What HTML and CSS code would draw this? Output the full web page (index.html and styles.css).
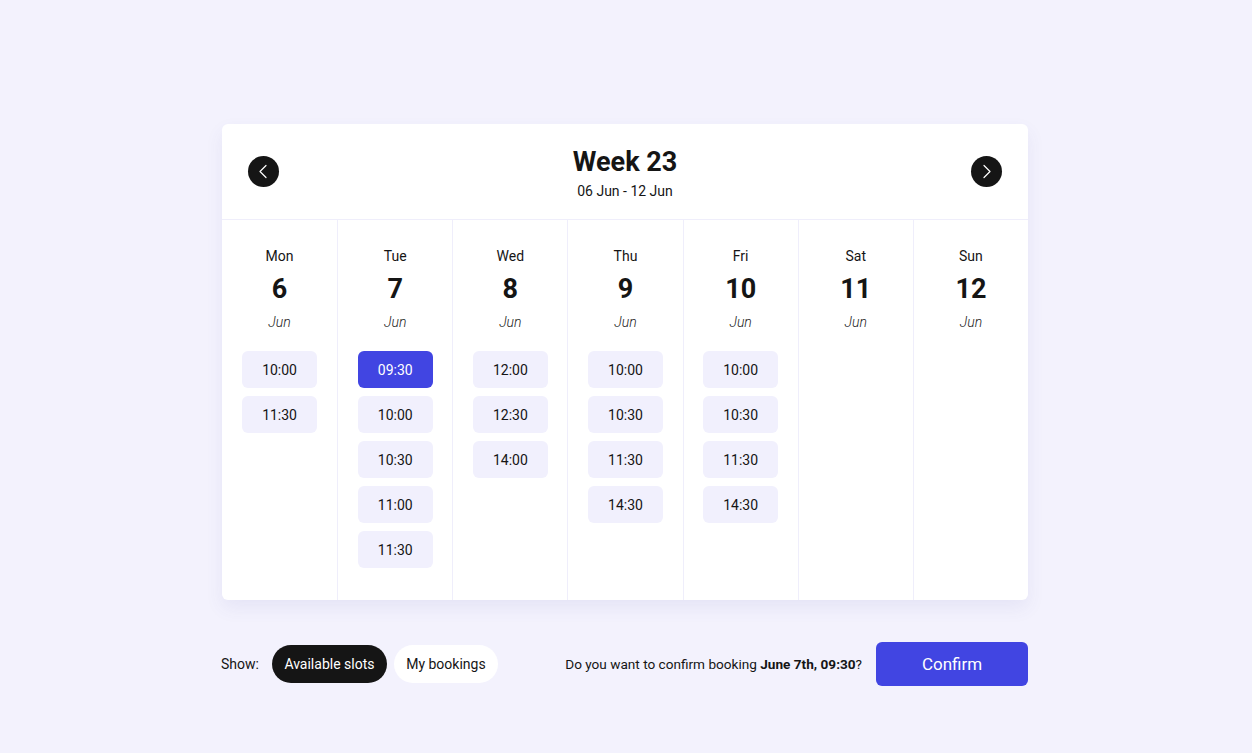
FILE: index.html
```html
<!DOCTYPE html>
<html lang="en">
<head>
<meta charset="utf-8">
<title>Week 23</title>
<link rel="stylesheet" href="styles.css">
</head>
<body>
<main class="wrap">
  <section class="card">
    <header class="card-head">
      <button class="nav" aria-label="Previous week">
        <svg width="31" height="31" viewBox="0 0 31 31"><path d="M18 9.5 L12 15.5 L18 21.5" fill="none" stroke="#fff" stroke-width="1.2" stroke-linecap="round" stroke-linejoin="round"/></svg>
      </button>
      <div class="title">
        <h1>Week 23</h1>
        <p>06 Jun - 12 Jun</p>
      </div>
      <button class="nav" aria-label="Next week">
        <svg width="31" height="31" viewBox="0 0 31 31"><path d="M13 9.5 L19 15.5 L13 21.5" fill="none" stroke="#fff" stroke-width="1.2" stroke-linecap="round" stroke-linejoin="round"/></svg>
      </button>
    </header>
    <div class="days">
      <div class="day">
        <div class="dname">Mon</div><div class="dnum">6</div><div class="dmon">Jun</div>
        <div class="slots"><span class="slot">10:00</span><span class="slot">11:30</span></div>
      </div>
      <div class="day">
        <div class="dname">Tue</div><div class="dnum">7</div><div class="dmon">Jun</div>
        <div class="slots"><span class="slot active">09:30</span><span class="slot">10:00</span><span class="slot">10:30</span><span class="slot">11:00</span><span class="slot">11:30</span></div>
      </div>
      <div class="day">
        <div class="dname">Wed</div><div class="dnum">8</div><div class="dmon">Jun</div>
        <div class="slots"><span class="slot">12:00</span><span class="slot">12:30</span><span class="slot">14:00</span></div>
      </div>
      <div class="day">
        <div class="dname">Thu</div><div class="dnum">9</div><div class="dmon">Jun</div>
        <div class="slots"><span class="slot">10:00</span><span class="slot">10:30</span><span class="slot">11:30</span><span class="slot">14:30</span></div>
      </div>
      <div class="day">
        <div class="dname">Fri</div><div class="dnum">10</div><div class="dmon">Jun</div>
        <div class="slots"><span class="slot">10:00</span><span class="slot">10:30</span><span class="slot">11:30</span><span class="slot">14:30</span></div>
      </div>
      <div class="day">
        <div class="dname">Sat</div><div class="dnum">11</div><div class="dmon">Jun</div>
        <div class="slots"></div>
      </div>
      <div class="day">
        <div class="dname">Sun</div><div class="dnum">12</div><div class="dmon">Jun</div>
        <div class="slots"></div>
      </div>
    </div>
  </section>
  <footer class="bar">
    <div class="show">
      <span class="show-label">Show:</span>
      <button class="pill dark">Available slots</button>
      <button class="pill light">My bookings</button>
    </div>
    <div class="confirm-area">
      <span class="question">Do you want to confirm booking <b>June 7th, 09:30</b>?</span>
      <button class="confirm">Confirm</button>
    </div>
  </footer>
</main>
</body>
</html>
```
FILE: styles.css
```css
* { box-sizing: border-box; }
html, body { margin: 0; padding: 0; }
body {
  background: #f3f2fd;
  font-family: Roboto, "Liberation Sans", sans-serif;
  color: #151515;
  height: 753px;
  overflow: hidden;
}
.wrap {
  width: 806px;
  margin-left: 222px;
  padding-top: 124px;
}
.card {
  background: #fff;
  border-radius: 6px;
  box-shadow: 0 8px 18px rgba(80, 80, 160, 0.08);
  overflow: hidden;
}
.card-head {
  height: 96px;
  display: flex;
  align-items: center;
  justify-content: space-between;
  padding: 0 26px 0 26px;
  border-bottom: 1px solid #efeefb;
}
.nav {
  width: 31px;
  height: 31px;
  border-radius: 50%;
  background: #151515;
  border: 0;
  padding: 0;
  display: flex;
}
.title { text-align: center; padding-top: 2px; }
.title h1 {
  margin: 0;
  font-size: 27px;
  line-height: 32px;
  font-weight: 700;
}
.title p {
  margin: 4px 0 0;
  font-size: 14px;
  line-height: 18px;
}
.days {
  display: grid;
  grid-template-columns: repeat(7, 1fr);
}
.day {
  text-align: center;
  padding: 27px 0 32px;
  border-left: 1px solid #efeefb;
}
.day:first-child { border-left: 0; }
.dname { font-size: 14px; line-height: 18px; }
.dnum { font-size: 27px; line-height: 32px; font-weight: 700; margin-top: 8px; }
.dmon { font-size: 14px; line-height: 18px; font-style: italic; font-weight: 300; margin-top: 8px; color: #222; }
.slots {
  margin-top: 20px;
  display: flex;
  flex-direction: column;
  align-items: center;
  gap: 8px;
}
.slot {
  width: 75px;
  height: 37px;
  border-radius: 6px;
  background: #f1f0fd;
  font-size: 14px;
  line-height: 38px;
}
.slot.active { background: #4145e2; color: #fff; }
.bar {
  margin-top: 42px;
  display: flex;
  align-items: center;
  justify-content: space-between;
  height: 44px;
}
.show { display: flex; align-items: center; margin-left: -1px; }
.show-label { font-size: 14px; margin-right: 13px; }
.pill {
  height: 38px;
  border-radius: 19px;
  border: 0;
  font-family: inherit;
  font-size: 14px;
  padding: 0;
  white-space: nowrap;
}
.pill.dark { background: #151515; color: #fff; width: 115px; }
.pill.light { background: #fff; color: #151515; width: 104px; margin-left: 7px; }
.confirm-area { display: flex; align-items: center; }
.question { font-size: 13.6px; margin-right: 14px; white-space: nowrap; }
.question b { font-weight: 700; }
.confirm {
  width: 152px;
  height: 44px;
  border: 0;
  border-radius: 6px;
  background: #4145e2;
  color: #fff;
  font-family: inherit;
  font-size: 17px;
}
```
